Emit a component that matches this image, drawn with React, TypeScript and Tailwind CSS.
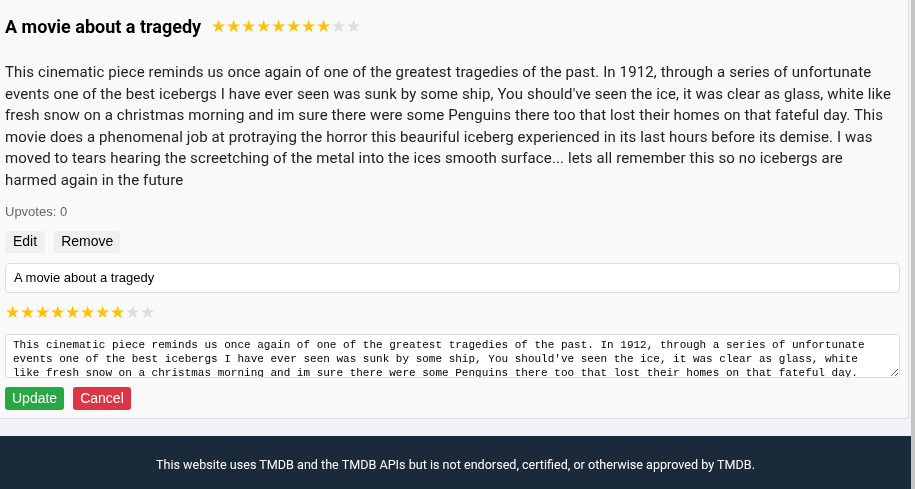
import React, { useState } from 'react';

const reviewText =
  "This cinematic piece reminds us once again of one of the greatest tragedies of the past. In 1912, through a series of unfortunate events one of the best icebergs I have ever seen was sunk by some ship, You should've seen the ice, it was clear as glass, white like fresh snow on a christmas morning and im sure there were some Penguins there too that lost their homes on that fateful day. This movie does a phenomenal job at protraying the horror this beauriful iceberg experienced in its last hours before its demise. I was moved to tears hearing the screetching of the metal into the ices smooth surface... lets all remember this so no icebergs are harmed again in the future";

const Stars: React.FC<{ value: number; size: string }> = ({ value, size }) => (
  <span className={`inline-flex ${size} leading-none`}>
    {Array.from({ length: 10 }).map((_, i) => (
      <span key={i} className={i < value ? 'text-[#ffc107]' : 'text-[#dddddd]'}>
        ★
      </span>
    ))}
  </span>
);

const App: React.FC = () => {
  const [title, setTitle] = useState('A movie about a tragedy');
  const [body, setBody] = useState(reviewText);

  return (
    <div className="flex min-h-[489px] bg-[#f1f2f5] font-['Roboto',sans-serif]">
      <div className="flex flex-1 flex-col">
        {/* review card */}
        <div className="mr-[2px] rounded-br-[4px] border-r border-b border-[#dedede] bg-[#f9f9f9] px-[5px] pt-[13px] pb-[8px]">
          <div className="flex items-center gap-[10px]">
            <h2 className="text-[18px] font-bold text-black">{title}</h2>
            <Stars value={8} size="text-[17px]" />
          </div>

          <p className="mt-[22px] w-[893px] text-[15px] leading-[21.5px] tracking-[0.12px] text-[#222]">{body}</p>

          <p className="mt-[11px] font-['Liberation_Sans',sans-serif] text-[13px] text-[#666]">Upvotes: 0</p>

          <div className="mt-[9px] flex gap-[9px] font-['Liberation_Sans',sans-serif] text-[14px] text-black">
            <button className="h-[22px] rounded-[3px] bg-[#efefef] px-[8px]">Edit</button>
            <button className="h-[22px] rounded-[3px] bg-[#efefef] px-[7px]">Remove</button>
          </div>

          <input
            value={title}
            onChange={(e) => setTitle(e.target.value)}
            className="mt-[10px] block h-[30px] w-[895px] rounded-[4px] border border-[#dcdcdc] bg-white px-[8px] font-['Liberation_Sans',sans-serif] text-[13px] text-black outline-none"
          />

          <div className="mt-[8px]">
            <Stars value={8} size="text-[17px]" />
          </div>

          <textarea
            value={body}
            onChange={(e) => setBody(e.target.value)}
            className="mt-[9px] block h-[44px] w-[895px] resize-y rounded-[4px] border border-[#dcdcdc] bg-white pt-[3px] pr-[24px] pl-[7px] font-['Liberation_Mono',monospace] text-[11px] leading-[14px] text-black outline-none"
          />

          <div className="mt-[9px] flex gap-[9px] font-['Liberation_Sans',sans-serif] text-[14px] text-white">
            <button className="h-[23px] rounded-[3px] bg-[#28a745] px-[7px]">Update</button>
            <button className="h-[23px] rounded-[3px] bg-[#dc3545] px-[7px]">Cancel</button>
          </div>
        </div>

        <div className="h-[17px]" />

        {/* footer */}
        <footer className="flex h-[53px] items-center justify-center bg-[#1b2a3a] pt-[7px] text-[12.6px] text-white">
          This website uses TMDB and the TMDB APIs but is not endorsed, certified, or otherwise approved by TMDB.
        </footer>
      </div>
      <div className="w-[4px] bg-[#c4c4c4]" />
    </div>
  );
};

export default App;
